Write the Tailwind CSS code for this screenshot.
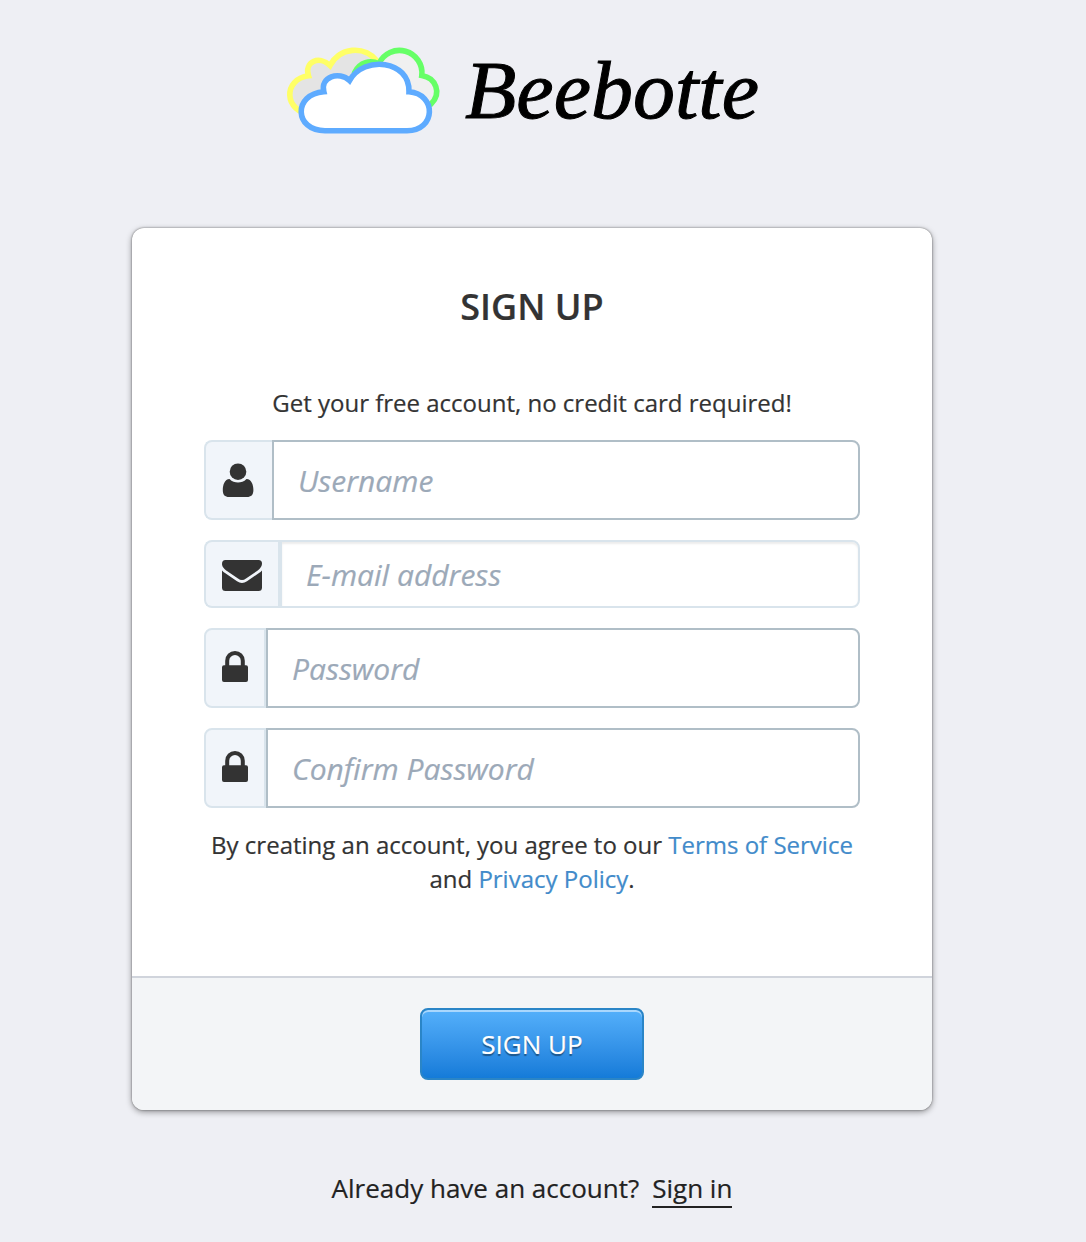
<!DOCTYPE html>
<html lang="en">
<head>
<meta charset="utf-8">
<title>Beebotte - Sign up</title>
<script src="https://cdn.jsdelivr.net/npm/@tailwindcss/browser@4"></script>
</head>
<body class="h-[1242px] overflow-hidden bg-[#eeeff4] font-['Open_Sans',sans-serif] text-[#333] [-webkit-text-stroke:0.2px]">
<div class="flex w-[1064px] flex-col items-center">
  <header class="h-[228px] pt-10">
    <svg class="ml-[-8px] block" width="496" height="104" viewBox="280 40 496 104" fill="none" stroke-width="5.6" role="img" aria-label="Beebotte">
      <path fill="#e4e4e4" stroke="#ffff66" d="M312 114.500 C283 112 283 79 308.500 75.800 C304 62 319 55 330 65.500 A28 28 0 0 1 377 61 V114z"/>
      <path fill="#f0f0f0" stroke="#66ff66" d="M355 72 C360 62 370 60 379 63.500 A22.500 22.500 0 0 1 421.800 75.500 C436 78 442 93 431 104 L400 114z"/>
      <path fill="#fff" stroke="#5eabff" d="M325 130.700 C294 130.700 293 94 323.800 91.800 C320 77 339 70.500 349.500 80.500 C364 55 410 60 409 91.800 C437 94 436 130.700 407 130.700z"/>
      <text x="465" y="117.500" fill="#000" stroke="#000" stroke-width="1" font-family="Liberation Serif, serif" font-style="italic" font-size="83" textLength="294" lengthAdjust="spacingAndGlyphs">Beebotte</text>
    </svg>
  </header>
  <main class="h-[882px] w-[800px] overflow-hidden rounded-xl bg-white shadow-[0_0_2px_rgba(0,0,0,0.5),0_2px_6px_rgba(0,0,0,0.4)]">
    <form>
      <section class="h-[748px] px-[72px] pt-[52px] text-center">
        <h1 class="text-[36px] leading-[54px] font-semibold">SIGN UP</h1>
        <p class="mt-[52px] text-[24px] leading-[34px]">Get your free account, no credit card required!</p>
        <div class="mt-5 flex flex-col gap-5">
          <div class="flex h-20">
            <span class="flex w-[68px] items-center rounded-l-lg border-2 border-r-0 border-[#d9e4ec] bg-[#f1f5fa] pl-4">
              <svg width="32" height="34" viewBox="0 0 32 34" fill="#333"><circle cx="16" cy="8.700" r="8.300"/><path d="M7.500 16 C10 18.800 13 19.400 16 19.400 S22 18.800 24.500 16 C29.500 16 31.400 22 31.400 27 C31.400 32 29 34 25 34 H7 C3 34 .8 32 .8 27 C.8 22 2.700 16 7.500 16z"/></svg>
            </span>
            <input aria-label="Username" placeholder="Username" class="min-w-0 flex-1 rounded-r-lg border-2 border-[#b0bec7] px-6 text-[30px] placeholder:text-[#9ca9b8] placeholder:italic">
          </div>
          <div class="flex h-[68px]">
            <span class="flex w-[74px] items-center rounded-l-lg border-2 border-r-0 border-[#d9e4ec] bg-[#f1f5fa] pt-0.5 pl-4">
              <svg width="40" height="31" viewBox="0 0 40 31" fill="#333"><path d="M3.500 0 H36.500 Q40 0 40 3.500 C40 7 37 9.500 35 11 L24 18.500 Q20 21.500 16 18.500 L5 11 C3 9.500 0 7 0 4 Q0 0 3.500 0z"/><path d="M0 10.500 Q1.500 12 3 13 L15 21.300 Q20 24.500 25 21.300 L37 13 Q38.500 12 40 10.500 V27.500 Q40 31 36.500 31 H3.500 Q0 31 0 27.500z"/></svg>
            </span>
            <input aria-label="E-mail address" placeholder="E-mail address" class="min-w-0 flex-1 rounded-r-lg border-2 border-l-4 border-[#d9e4ec] px-6 text-[30px] shadow-[inset_0_2px_2px_rgba(0,0,0,0.08)] placeholder:text-[#9ca9b8] placeholder:italic">
          </div>
          <div class="flex h-20">
            <span class="flex w-[62px] items-center rounded-l-lg border-2 border-[#d9e4ec] bg-[#f1f5fa] pb-1 pl-4">
              <svg width="26" height="31" viewBox="0 0 26 31" fill="#333"><path fill-rule="evenodd" d="M3.200 14.300 V9.800 A9.800 9.800 0 0 1 22.800 9.800 V14.300 H24 Q26 14.300 26 16.300 V29 Q26 31 24 31 H2 Q0 31 0 29 V16.300 Q0 14.300 2 14.300z M7.200 14.300 H18.800 V9.800 A5.800 5.800 0 0 0 7.200 9.800z"/></svg>
            </span>
            <input aria-label="Password" type="password" placeholder="Password" class="min-w-0 flex-1 rounded-r-lg border-2 border-[#b0bec7] px-6 text-[30px] placeholder:text-[#9ca9b8] placeholder:italic">
          </div>
          <div class="flex h-20">
            <span class="flex w-[62px] items-center rounded-l-lg border-2 border-[#d9e4ec] bg-[#f1f5fa] pb-1 pl-4">
              <svg width="26" height="31" viewBox="0 0 26 31" fill="#333"><path fill-rule="evenodd" d="M3.200 14.300 V9.800 A9.800 9.800 0 0 1 22.800 9.800 V14.300 H24 Q26 14.300 26 16.300 V29 Q26 31 24 31 H2 Q0 31 0 29 V16.300 Q0 14.300 2 14.300z M7.200 14.300 H18.800 V9.800 A5.800 5.800 0 0 0 7.200 9.800z"/></svg>
            </span>
            <input aria-label="Confirm Password" type="password" placeholder="Confirm Password" class="min-w-0 flex-1 rounded-r-lg border-2 border-[#b0bec7] px-6 text-[30px] placeholder:text-[#9ca9b8] placeholder:italic">
          </div>
        </div>
        <p class="mt-5 text-[24px] leading-[34px]">By creating an account, you agree to our <a class="text-[#428bca]">Terms of Service</a><br>and <a class="text-[#428bca]">Privacy Policy</a>.</p>
      </section>
      <footer class="flex h-[134px] items-center justify-center border-t-2 border-[#d0d4dc] bg-[#f3f5f7]">
        <button type="button" class="h-[72px] w-56 rounded-lg border-2 border-[#2a85c7] bg-linear-to-b from-[#54b0fb] to-[#147bd9] text-[26px] text-white shadow-[inset_0_2px_0_rgba(255,255,255,0.5)] text-shadow-[0_2px_1px_rgba(0,0,0,0.4)]">SIGN UP</button>
      </footer>
    </form>
  </main>
  <p class="mt-[60px] flex text-[26px] leading-9 text-[#222]">Already have an account?<a class="ml-[13px] h-[38px] border-b-2 border-[#222]">Sign in</a></p>
</div>
</body>
</html>
